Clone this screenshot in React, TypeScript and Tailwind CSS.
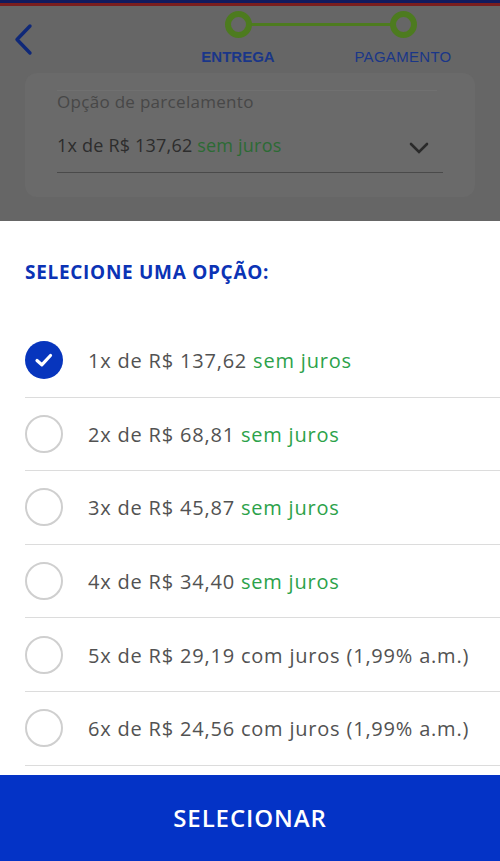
type Installment = {
  count: number
  value: string
  interestFree: boolean
}

const options: Installment[] = [
  { count: 1, value: '137,62', interestFree: true },
  { count: 2, value: '68,81', interestFree: true },
  { count: 3, value: '45,87', interestFree: true },
  { count: 4, value: '34,40', interestFree: true },
  { count: 5, value: '29,19', interestFree: false },
  { count: 6, value: '24,56', interestFree: false },
]

const font = { fontFamily: '"Open Sans", "Noto Sans", sans-serif' }

const StepDot = () => (
  <div className="w-[27px] h-[27px] rounded-full border-[6px] border-[#4d7b1f] bg-[#666666] relative z-10" />
)

const Header = () => {
  return (
    <div className="h-[221px] bg-[#666666] flex flex-col">
      <div className="h-[3px] bg-[#111b5e]" />
      <div className="h-[3px] bg-[#7a1e1e]" />
      <div className="flex items-start">
        <svg width="40" height="40" viewBox="0 0 40 40" className="mt-[14px] ml-[5px]">
          <path d="M25 6 L12 19.5 L25 33" fill="none" stroke="#0f2878" strokeWidth="3.4" strokeLinecap="round" strokeLinejoin="round" />
        </svg>
        <div className="relative flex ml-[143px] mt-[5px] gap-[65px]">
          <div className="absolute left-[62px] top-[12px] w-[141px] h-[3px] bg-[#4d7b1f]" />
          <div className="w-[100px] flex flex-col items-center">
            <StepDot />
            <span className="mt-[8px] text-[15px] font-bold text-[#1a3688]" style={{ fontFamily: '"Liberation Sans", sans-serif' }}>
              ENTREGA
            </span>
          </div>
          <div className="w-[100px] flex flex-col items-center">
            <StepDot />
            <span className="mt-[8px] text-[15px] tracking-[0.3px] text-[#1a3688]" style={{ fontFamily: '"Liberation Sans", sans-serif' }}>
              PAGAMENTO
            </span>
          </div>
        </div>
      </div>
      <div className="mx-[25px] mt-[4px] h-[124px] rounded-[12px] bg-[#6a6a6a] px-[32px] pt-[17px]" style={font}>
        <div className="h-px bg-[#707070] mr-[6px]" />
        <div className="text-[17px] tracking-[0.3px] text-[#474747] leading-[22px]">Opção de parcelamento</div>
        <div className="flex items-center justify-between mt-[20px] border-b border-[#4a4a4a] pb-[15px]">
          <span className="text-[18px] tracking-[0.2px] text-[#2d2d2d] leading-[24px]">
            1x de R$ 137,62 <span className="text-[#2c6a34]">sem juros</span>
          </span>
          <svg width="22" height="14" viewBox="0 0 22 14" className="mr-[13px] mt-[6px]">
            <path d="M3 3 L11 11 L19 3" fill="none" stroke="#2a2a2a" strokeWidth="2.6" strokeLinecap="round" />
          </svg>
        </div>
      </div>
    </div>
  )
}

const Radio = ({ checked }: { checked: boolean }) => {
  if (checked) {
    return (
      <div className="w-[38px] h-[38px] rounded-full bg-[#0735bd] flex items-center justify-center shrink-0">
        <svg width="20" height="16" viewBox="0 0 20 16">
          <path d="M3 8.5 L7.8 12.8 L16.5 3.5" fill="none" stroke="white" strokeWidth="3.2" strokeLinecap="round" strokeLinejoin="round" />
        </svg>
      </div>
    )
  }
  return <div className="w-[38px] h-[38px] rounded-full border-2 border-[#cfcfcf] shrink-0" />
}

export default function App() {
  return (
    <div className="w-[500px] h-[861px] flex flex-col overflow-hidden bg-white">
      <Header />
      <div className="flex-1 flex flex-col min-h-0" style={font}>
        <h2 className="pt-[39px] px-[25px] text-[19px] leading-[24px] font-bold tracking-[0.7px] text-[#0b33b5]">
          SELECIONE UMA OPÇÃO:
        </h2>
        <ul className="flex-1 min-h-0 overflow-hidden ml-[25px] mt-[40px]">
          {options.map((o, i) => (
            <li key={o.count} className="h-[73.6px] flex items-center gap-[25px] border-b border-[#dcdcdc]">
              <Radio checked={i === 0} />
              <span className="text-[20px] tracking-[0.8px] text-[#525252] whitespace-nowrap mt-[2px]">
                {o.count}x de R$ {o.value}{' '}
                {o.interestFree ? (
                  <span className="text-[#2ca24a]">sem juros</span>
                ) : (
                  'com juros (1,99% a.m.)'
                )}
              </span>
            </li>
          ))}
        </ul>
        <button className="h-[86px] shrink-0 bg-[#0433c6] text-white text-[24px] font-semibold tracking-[0.9px]">
          SELECIONAR
        </button>
      </div>
    </div>
  )
}
